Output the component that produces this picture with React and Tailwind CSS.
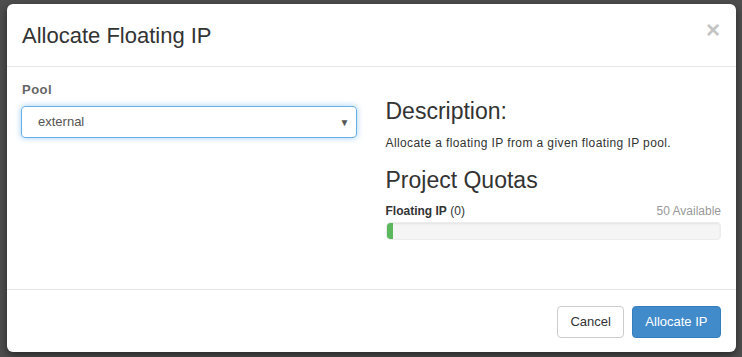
import React from 'react';

const font = { fontFamily: '"Liberation Sans", Arial, sans-serif' };

// Quota bar row
const QuotaBar = ({ label, used, available, total }) => {
  const pct = total > 0 ? Math.max((used / total) * 100, 2) : 0;
  return (
    <div>
      <div className="flex justify-between items-end text-[12px] leading-[16px]">
        <span className="text-[#333]">
          <span className="font-bold">{label}</span> ({used})
        </span>
        <span className="text-[#999]">{available} Available</span>
      </div>
      <div className="mt-[3px] h-[18px] rounded-[4px] bg-[#f5f5f5] border border-[#ececec] shadow-[inset_0_1px_2px_rgba(0,0,0,0.08)] overflow-hidden">
        <div className="h-full bg-[#5cb85c] rounded-l-[3px]" style={{ width: `${pct}%` }}></div>
      </div>
    </div>
  );
};

export default function App() {
  return (
    <div className="w-[742px] h-[357px] bg-[#4e4e4e] overflow-hidden pt-[4px] pl-[7px]" style={font}>
      <div className="w-[729px] h-[348px] bg-white rounded-[6px] shadow-[0_3px_9px_rgba(0,0,0,0.5)] flex flex-col">
        {/* Header */}
        <div className="h-[63px] border-b border-[#e5e5e5] flex items-center justify-between pl-[15px] pr-[16px]">
          <h3 className="text-[22px] leading-[26px] text-[#333] mt-[1px]">Allocate Floating IP</h3>
          <span className="text-[24px] font-bold leading-none text-[#c4c4c4] -mt-[10px]">×</span>
        </div>

        {/* Body */}
        <div className="flex-1 grid grid-cols-2 gap-[30px] px-[15px] pt-[15px]">
          <div>
            <div className="text-[13px] font-bold text-[#666] tracking-[0.5px] leading-[16px]">Pool</div>
            <div className="mt-[8px] -ml-[1px] h-[32px] border border-[#66afe9] rounded-[4px] shadow-[0_0_6px_rgba(102,175,233,0.6)] flex items-center justify-between pl-[16px] pr-[6px]">
              <span className="text-[13px] text-[#555]">external</span>
              <span className="text-[10px] text-[#555]">▼</span>
            </div>
          </div>
          <div className="-ml-[1px]">
            <h3 className="text-[23px] leading-[28px] text-[#333] mt-[15px]">Description:</h3>
            <p className="text-[12px] leading-[16px] text-[#333] mt-[10px] tracking-[0.4px]">
              Allocate a floating IP from a given floating IP pool.
            </p>
            <h3 className="text-[23px] leading-[28px] text-[#333] mt-[15px]">Project Quotas</h3>
            <div className="mt-[9px]">
              <QuotaBar label="Floating IP" used={0} available={50} total={50} />
            </div>
          </div>
        </div>

        {/* Footer */}
        <div className="h-[63px] border-t border-[#e5e5e5] flex items-center justify-end gap-[8px] pr-[15px] pt-[1px]">
          <button className="h-[32px] px-[12px] border border-[#ccc] rounded-[4px] bg-white text-[13px] text-[#333]">Cancel</button>
          <button className="h-[32px] px-[12.5px] border border-[#357ebd] rounded-[4px] bg-[#428bca] text-[13px] text-white">Allocate IP</button>
        </div>
      </div>
    </div>
  );
}
